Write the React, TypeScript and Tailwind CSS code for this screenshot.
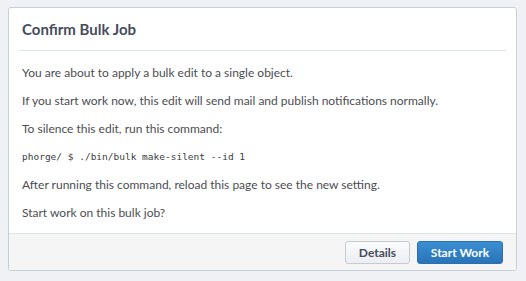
export default function App() {
  return (
    <div className="min-h-[281px] w-[526px] bg-[#eff1f4] pt-[7px] pl-[8px] pr-[9px] pb-[10px] font-[Lato,'Noto_Sans',sans-serif]">
      <div className="flex flex-col w-[509px] border border-[#c7d0d9] rounded-[3px] bg-white overflow-hidden">
        <div className="mx-[10px] pt-[11px] pb-[11px] pl-[3px] border-b border-[#dde5ec]">
          <h1 className="text-[15px] leading-[20px] font-bold text-[#464c5c]">Confirm Bulk Job</h1>
        </div>
        <div className="px-[13px] pt-[13px] pb-[11px] text-[12px] leading-[18px] text-[#4b4d51] flex flex-col gap-[10px]">
          <p>You are about to apply a bulk edit to a single object.</p>
          <p>If you start work now, this edit will send mail and publish notifications normally.</p>
          <p>To silence this edit, run this command:</p>
          <p className="text-[9.5px] leading-[18px] text-[#3a3c40] font-['DejaVu_Sans_Mono',monospace]">phorge/ $ ./bin/bulk make-silent --id 1</p>
          <p>After running this command, reload this page to see the new setting.</p>
          <p>Start work on this bulk job?</p>
        </div>
        <div className="flex justify-end gap-[7px] bg-[#f5f5f5] border-t border-[#dde5ec] px-[13px] pt-[7px] pb-[6px]">
          <button className="h-[23px] w-[65px] rounded-[3px] border border-[#c4cbd3] bg-gradient-to-b from-[#fbfbfc] to-[#eceef1] text-[12px] font-bold text-[#464c5c]">Details</button>
          <button className="h-[23px] w-[86px] rounded-[3px] border border-[#2b6fae] bg-gradient-to-b from-[#3b8ed2] to-[#2a74b8] text-[12px] font-bold text-white">Start Work</button>
        </div>
      </div>
    </div>
  );
}
